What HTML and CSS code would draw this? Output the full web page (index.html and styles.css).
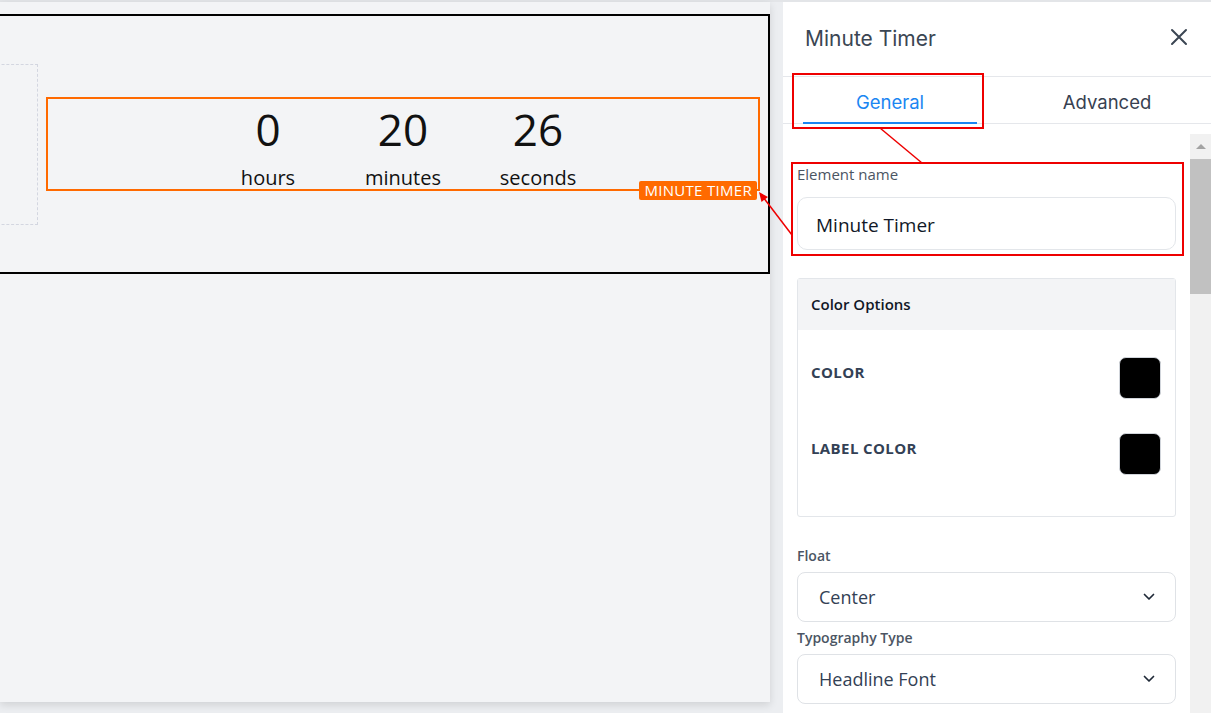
FILE: index.html
```html
<!DOCTYPE html>
<html lang="en">
<head>
  <meta charset="UTF-8" />
  <meta name="viewport" content="width=device-width, initial-scale=1" />
  <title>Minute Timer - Editor</title>
  <link rel="stylesheet" href="styles.css">
</head>
<body>
  <div class="app">

    <!-- Canvas -->
    <main class="canvas">
      <section class="row-block">
        <div class="drop-slot"></div>
        <div class="timer-el">
          <div class="timer">
            <div class="unit"><div class="num">0</div><div class="lbl">hours</div></div>
            <div class="unit"><div class="num">20</div><div class="lbl">minutes</div></div>
            <div class="unit"><div class="num">26</div><div class="lbl">seconds</div></div>
          </div>
          <span class="el-badge">MINUTE TIMER</span>
        </div>
      </section>
    </main>

    <!-- Settings panel -->
    <aside class="panel">
      <header class="panel-head">
        <h2>Minute Timer</h2>
        <span class="close-btn">
          <svg width="18" height="18" viewBox="0 0 18 18"><path d="M2 2 L16 16 M16 2 L2 16" stroke="#3b4653" stroke-width="2" stroke-linecap="round" fill="none"/></svg>
        </span>
      </header>

      <nav class="tabs">
        <div class="tab active">General</div>
        <div class="tab">Advanced</div>
      </nav>

      <div class="panel-body">
        <div class="panel-scroll">
          <label class="field-label">Element name</label>
          <input class="text-input" type="text" value="Minute Timer" />

          <div class="card">
            <div class="card-head">Color Options</div>
            <div class="card-body">
              <div class="color-row"><span>COLOR</span><div class="swatch"></div></div>
              <div class="color-row"><span>LABEL COLOR</span><div class="swatch"></div></div>
            </div>
          </div>

          <label class="field-label strong first">Float</label>
          <div class="select">
            <span>Center</span>
            <svg width="12" height="8" viewBox="0 0 12 8"><polyline points="1.5,1.5 6,6 10.5,1.5" fill="none" stroke="#1f2937" stroke-width="1.7" stroke-linecap="round" stroke-linejoin="round"/></svg>
          </div>

          <label class="field-label strong">Typography Type</label>
          <div class="select">
            <span>Headline Font</span>
            <svg width="12" height="8" viewBox="0 0 12 8"><polyline points="1.5,1.5 6,6 10.5,1.5" fill="none" stroke="#1f2937" stroke-width="1.7" stroke-linecap="round" stroke-linejoin="round"/></svg>
          </div>
        </div>

        <div class="scrollbar">
          <div class="sb-arrow"></div>
          <div class="sb-thumb"></div>
        </div>
      </div>
    </aside>
  </div>

  <!-- Red annotation marks -->
  <svg class="annotations" width="1211" height="713" viewBox="0 0 1211 713">
    <rect x="793" y="74" width="190" height="54" fill="none" stroke="#ee0000" stroke-width="2"/>
    <rect x="792" y="163" width="391" height="92" fill="none" stroke="#ee0000" stroke-width="2"/>
    <line x1="880" y1="128" x2="922" y2="163" stroke="#ee0000" stroke-width="1.5"/>
    <line x1="792" y1="235" x2="763" y2="197" stroke="#ee0000" stroke-width="1.5"/>
    <polygon points="759,192 768,197 761.5,202" fill="#ee0000"/>
  </svg>
</body>
</html>
```

FILE: styles.css
```css
/* Base */
html, body {
  margin: 0; padding: 0;
  height: 100%;
}
body {
  background: #eceef1;
  font-family: "Open Sans", "Noto Sans", sans-serif;
  overflow: hidden;
}
.app {
  display: flex;
  height: 711px;
  border-top: 2px solid #e3e5e8;
}

/* Canvas */
.canvas {
  width: 770px;
  height: 700px;
  flex-shrink: 0;
  box-sizing: border-box;
  padding-top: 12px;
  background: #f3f4f6;
  box-shadow: 0 3px 8px rgba(0,0,0,0.12);
  overflow: hidden;
}
.row-block {
  display: flex;
  align-items: center;
  width: 780px;
  height: 260px;
  margin-left: -10px;
  box-sizing: border-box;
  border: 2px solid #000;
  padding-right: 8px;
}
.drop-slot {
  width: 46px;
  height: 161px;
  margin-right: 8px;
  box-sizing: border-box;
  border: 1px dashed #d3d6e0;
}
.timer-el {
  flex: 1;
  position: relative;
  border: 2px solid #ff6a00;
  padding: 6px 0 0;
}
.timer {
  display: flex;
  justify-content: center;
}
.timer .unit {
  width: 135px;
  text-align: center;
  color: #111;
}
.timer .num {
  font-size: 44px;
  line-height: 1.1;
}
.timer .lbl {
  font-size: 20px;
  line-height: 22px;
  margin-top: 14px;
}
.el-badge {
  position: absolute;
  right: 1px;
  bottom: -11px;
  background: #ff6a00;
  color: #fff;
  font-size: 15px;
  line-height: 19px;
  letter-spacing: 0.3px;
  padding: 0 5px;
  border-radius: 2px;
}

/* Panel */
.panel {
  width: 428px;
  margin-left: auto;
  background: #fff;
  display: flex;
  flex-direction: column;
}
.panel-head {
  height: 75px;
  box-sizing: border-box;
  display: flex;
  align-items: center;
  justify-content: space-between;
  padding: 0 23px 2px 22px;
  border-bottom: 1px solid #e5e7eb;
}
.panel-head h2 {
  margin: 0;
  font-family: Inter, sans-serif;
  font-weight: 400;
  font-size: 21px;
  color: #3b4653;
}
.close-btn {
  display: flex;
  width: 18px;
  height: 18px;
  margin-bottom: 2px;
}
.tabs {
  display: flex;
  gap: 43px;
  height: 47px;
  box-sizing: border-box;
  padding: 0 17px 0 20px;
  border-bottom: 1px solid #e5e7eb;
}
.tab {
  flex: 1;
  height: 47px;
  margin-bottom: -1px;
  box-sizing: border-box;
  padding-top: 4px;
  display: flex;
  align-items: center;
  justify-content: center;
  font-family: Inter, sans-serif;
  font-size: 18.5px;
  color: #374151;
  border-bottom: 2px solid transparent;
}
.tab.active {
  color: #1a86f2;
  border-bottom-color: #1a86f2;
}

.panel-body {
  flex: 1;
  display: flex;
  min-height: 0;
}
.panel-scroll {
  flex: 1;
  padding: 40px 14px 0;
  overflow: hidden;
}
.scrollbar {
  width: 21px;
  margin-top: 10px;
  background: #f1f1f1;
}
.sb-arrow {
  height: 25px;
  display: flex;
  align-items: center;
  justify-content: center;
}
.sb-arrow::before {
  content: "";
  border-left: 5px solid transparent;
  border-right: 5px solid transparent;
  border-bottom: 5px solid #a3a3a3;
}
.sb-thumb {
  height: 135px;
  background: #c1c1c1;
}

/* Fields */
.field-label {
  display: block;
  font-size: 15px;
  line-height: 20px;
  color: #4b5563;
}
.field-label.strong {
  font-size: 14px;
  font-weight: 600;
  margin-top: 6px;
}
.field-label.first {
  margin-top: 29px;
}
.text-input {
  display: block;
  width: 100%;
  height: 53px;
  margin-top: 13px;
  box-sizing: border-box;
  padding: 2px 18px 0;
  border: 1px solid #e3e6ea;
  border-radius: 10px;
  font-family: "Open Sans", sans-serif;
  font-size: 19px;
  color: #111827;
  background: #fff;
  outline: none;
}
.card {
  margin-top: 28px;
  border: 1px solid #e3e6ea;
  border-radius: 3px;
}
.card-head {
  height: 51px;
  display: flex;
  align-items: center;
  padding: 0 13px 2px;
  box-sizing: border-box;
  background: #f3f4f6;
  font-size: 15px;
  font-weight: 600;
  color: #111827;
}
.card-body {
  display: flex;
  flex-direction: column;
  gap: 34px;
  padding: 27px 14px 41px 13px;
}
.color-row {
  display: flex;
  align-items: center;
  justify-content: space-between;
  height: 42px;
}
.color-row span {
  font-size: 15px;
  line-height: 20px;
  font-weight: 700;
  letter-spacing: 0.4px;
  color: #334155;
  margin-bottom: 13px;
}
.swatch {
  width: 42px;
  height: 42px;
  box-sizing: border-box;
  border: 1px solid #d1d5db;
  border-radius: 7px;
  background: #000;
}
.select {
  height: 50px;
  margin-top: 6px;
  box-sizing: border-box;
  display: flex;
  align-items: center;
  justify-content: space-between;
  padding: 0 20px 0 21px;
  border: 1px solid #dfe2e6;
  border-radius: 8px;
  font-size: 18px;
  color: #334155;
}

/* Annotation overlay */
.annotations {
  position: absolute;
  top: 0; left: 0;
  pointer-events: none;
}
```
